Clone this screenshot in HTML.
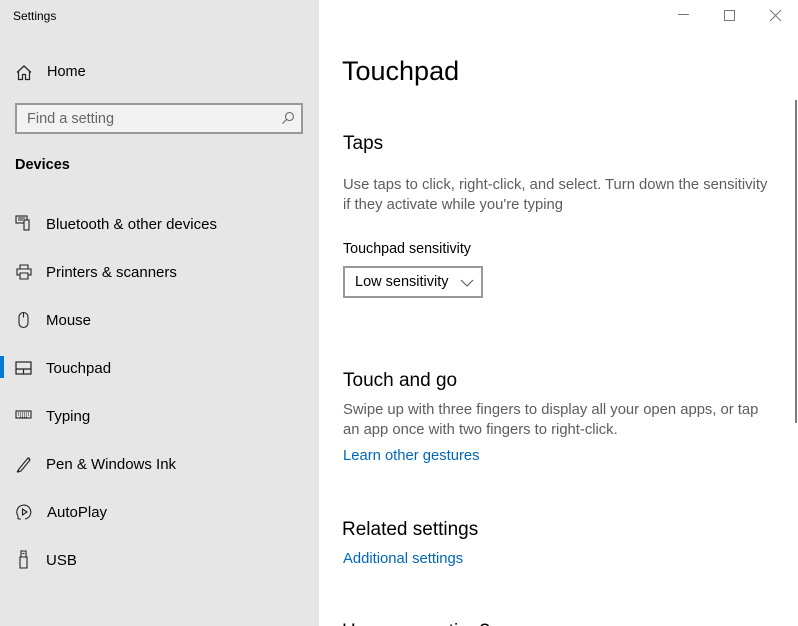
<!DOCTYPE html>
<html><head><meta charset="utf-8"><style>
*{margin:0;padding:0;box-sizing:border-box}
html,body{width:798px;height:626px;overflow:hidden}
body{font-family:"Liberation Sans",sans-serif;background:#fff;position:relative;color:#000}
.side{position:absolute;left:0;top:0;width:319px;height:626px;background:#e6e6e6}
.a{position:absolute;white-space:nowrap}
.nav{position:absolute;left:46px;font-size:15px;color:#000}
.ic{position:absolute;left:15px}
.link{color:#0067b8;font-size:14.8px}
.gray{color:#5d5d5d;font-size:14.8px;line-height:20px}
</style></head><body>
<div class="side">
<div class="a" style="left:13px;top:9px;font-size:12px">Settings</div>
<svg class="ic" style="top:64px" width="18" height="18" viewBox="0 0 18 18" fill="none" stroke="#222" stroke-width="1.2"><path d="M2 8.5 9 2l7 6.5M3.5 7v8.5h4v-5h3v5h4V7"/></svg>
<div class="a" style="left:47px;top:64px;font-size:14.5px">Home</div>
<div class="a" style="left:15px;top:103px;width:288px;height:31px;border:2px solid #999;background:#f2f2f2"></div>
<div class="a" style="left:27px;top:111px;font-size:14.5px;color:#666">Find a setting</div>
<svg class="a" style="left:281px;top:111px" width="14" height="14" viewBox="0 0 14 14" fill="none" stroke="#666" stroke-width="1.1"><circle cx="8.5" cy="5.5" r="4"/><path d="M5.5 8.5 1.5 12.5"/></svg>
<div class="a" style="left:15px;top:157px;font-size:14.5px;font-weight:bold">Devices</div>

<svg class="ic" style="top:215px" width="18" height="16" viewBox="0 0 18 16" fill="none" stroke="#222" stroke-width="1.1"><rect x="1" y="1" width="11" height="7"/><rect x="9" y="5" width="5" height="10" fill="#e6e6e6"/><path d="M3 3h7M3 5h5"/></svg>
<div class="nav" style="top:216px">Bluetooth &amp; other devices</div>
<svg class="ic" style="top:263px" width="18" height="18" viewBox="0 0 18 18" fill="none" stroke="#222" stroke-width="1.1"><path d="M5 6V2h8v4M5 12H2V6h14v6h-3M5 10h8v6H5z"/></svg>
<div class="nav" style="top:264px">Printers &amp; scanners</div>
<svg class="ic" style="top:311px" width="18" height="18" viewBox="0 0 18 18" fill="none" stroke="#222" stroke-width="1.1"><rect x="4" y="1.5" width="9" height="15" rx="4.5"/><path d="M8.5 1.5v5"/></svg>
<div class="nav" style="top:312px">Mouse</div>
<div class="a" style="left:0;top:356px;width:4px;height:22px;background:#0078d7"></div>
<svg class="ic" style="top:359px" width="18" height="18" viewBox="0 0 18 18" fill="none" stroke="#222" stroke-width="1.2"><rect x="1" y="3" width="15" height="12"/><path d="M1 10h15M8.5 10v5"/></svg>
<div class="nav" style="top:360px">Touchpad</div>
<svg class="ic" style="top:409px" width="18" height="12" viewBox="0 0 18 12" fill="none" stroke="#222" stroke-width="1.1"><rect x="1" y="2" width="15" height="7"/><path d="M3 4h11M3 6h11M5 8h7" stroke-dasharray="1 1"/></svg>
<div class="nav" style="top:408px">Typing</div>
<svg class="ic" style="top:455px" width="18" height="18" viewBox="0 0 18 18" fill="none" stroke="#222" stroke-width="1.1"><path d="M4 14 13 3l2 2-9 11-3 1zM12 4l3-1M2 17c1-1 1-2 2-3"/></svg>
<div class="nav" style="top:456px">Pen &amp; Windows Ink</div>
<svg class="ic" style="top:503px" width="18" height="18" viewBox="0 0 18 18" fill="none" stroke="#222" stroke-width="1.1"><path d="M10 16a7 7 0 1 0-7-3M3 13v3M3 16h3M7.5 6v6l4.5-3z"/></svg>
<div class="nav" style="left:47px;top:504px">AutoPlay</div>
<svg class="ic" style="top:550px" width="18" height="19" viewBox="0 0 18 19" fill="none" stroke="#222" stroke-width="1.1"><path d="M5 7h7v11H5zM6 7V1h5v6M7.5 3.5h2"/></svg>
<div class="nav" style="top:552px">USB</div>
</div>

<svg class="a" style="left:678px;top:14px" width="12" height="2"><rect width="11" height="1" fill="#777"/></svg>
<div class="a" style="left:724px;top:10px;width:11px;height:11px;border:1px solid #777"></div>
<svg class="a" style="left:769px;top:9px" width="13" height="13" viewBox="0 0 13 13" stroke="#777" stroke-width="1"><path d="M1 1l11 11M12 1 1 12"/></svg>
<div class="a" style="left:795px;top:100px;width:2px;height:323px;background:#7a7a7a"></div>

<div class="a" style="left:342px;top:56px;font-size:27px">Touchpad</div>
<div class="a" style="left:343px;top:133px;font-size:19px">Taps</div>
<div class="a gray" style="left:343px;top:175px">Use taps to click, right-click, and select. Turn down the sensitivity<br>if they activate while you're typing</div>
<div class="a" style="left:343px;top:241px;font-size:14.3px">Touchpad sensitivity</div>
<div class="a" style="left:343px;top:266px;width:140px;height:32px;border:2px solid #999"></div>
<div class="a" style="left:355px;top:274px;font-size:14.5px">Low sensitivity</div>
<svg class="a" style="left:460px;top:279px" width="14" height="8" viewBox="0 0 14 8" fill="none" stroke="#555" stroke-width="1"><path d="M1 1l6 6 6-6"/></svg>
<div class="a" style="left:343px;top:370px;font-size:19px">Touch and go</div>
<div class="a gray" style="left:343px;top:400px">Swipe up with three fingers to display all your open apps, or tap<br>an app once with two fingers to right-click.</div>
<div class="a link" style="left:343px;top:448px">Learn other gestures</div>
<div class="a" style="left:342px;top:519px;font-size:19px">Related settings</div>
<div class="a link" style="left:343px;top:551px">Additional settings</div>
<div class="a" style="left:342px;top:621px;font-size:19px">Have a question?</div>
</body></html>
